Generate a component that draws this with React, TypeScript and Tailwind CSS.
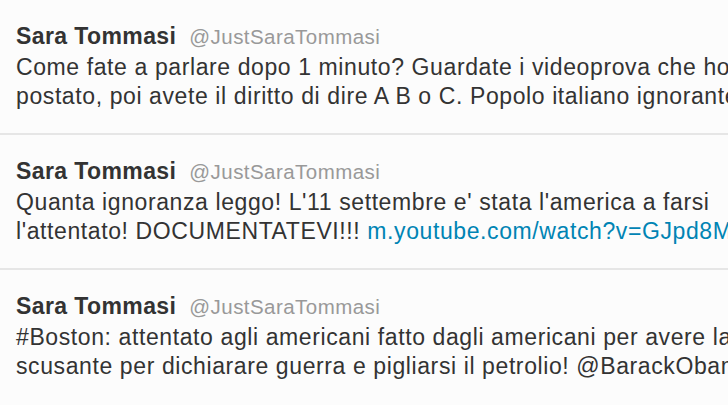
import React from "react";

type Tweet = { lines: React.ReactNode[] };

const tweets: Tweet[] = [
  {
    lines: [
      "Come fate a parlare dopo 1 minuto? Guardate i videoprova che ho",
      "postato, poi avete il diritto di dire A B o C. Popolo italiano ignorante",
    ],
  },
  {
    lines: [
      "Quanta ignoranza leggo! L'11 settembre e' stata l'america a farsi",
      <>
        l'attentato! DOCUMENTATEVI!!!{" "}
        <span className="text-[#0084b4]">m.youtube.com/watch?v=GJpd8M</span>
      </>,
    ],
  },
  {
    lines: [
      "#Boston: attentato agli americani fatto dagli americani per avere la",
      "scusante per dichiarare guerra e pigliarsi il petrolio! @BarackObama",
    ],
  },
];

export default function App() {
  return (
    <div
      className="w-[728px] h-[405px] overflow-hidden bg-[#fcfcfc] text-[#333333]"
      style={{ fontFamily: '"Liberation Sans", Arial, sans-serif' }}
    >
      {tweets.map((t, i) => (
        <div
          key={i}
          className={`h-[135px] pl-4 pt-[22px] whitespace-nowrap overflow-hidden ${
            i < 2 ? "border-b-2 border-[#e6e6e6]" : ""
          }`}
        >
          <div className="flex items-baseline gap-[13px] leading-[28px]">
            <span className="font-bold text-[23px] tracking-[0.4px] text-[#333333]">Sara Tommasi</span>
            <span className="text-[20.5px] tracking-[0.45px] text-[#999999]">@JustSaraTommasi</span>
          </div>
          <div className="mt-[2px] text-[23px] tracking-[0.6px] leading-[28.5px]">
            {t.lines.map((l, j) => (
              <div key={j}>{l}</div>
            ))}
          </div>
        </div>
      ))}
    </div>
  );
}
